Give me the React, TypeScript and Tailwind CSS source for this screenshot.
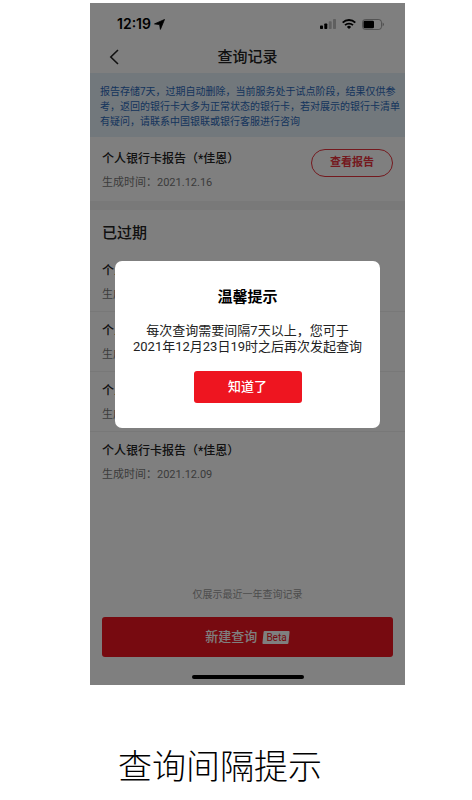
import { useState } from "react";

interface Report {
  id: number;
  title: string;
  date: string;
}

const current: Report = { id: 1, title: "个人银行卡报告（*佳恩）", date: "2021.12.16" };

const expired: Report[] = [
  { id: 2, title: "个人银行卡报告（*佳恩）", date: "2021.12.09" },
  { id: 3, title: "个人银行卡报告（*佳恩）", date: "2021.12.09" },
  { id: 4, title: "个人银行卡报告（*佳恩）", date: "2021.12.09" },
  { id: 5, title: "个人银行卡报告（*佳恩）", date: "2021.12.09" },
];

function StatusBar() {
  return (
    <div className="flex h-[42px] items-center justify-between pl-[27px] pr-[21px] text-black">
      <div className="flex items-center gap-[3px]">
        <span className="font-['Inter',sans-serif] text-[14px] leading-5 font-semibold">12:19</span>
        <svg
          width="11"
          height="11"
          viewBox="0 0 11 11"
          fill="currentColor"
          stroke="currentColor"
          strokeWidth=".8"
          strokeLinejoin="round"
          aria-hidden="true"
        >
          <path d="M10.5.5 6.4 10.4 5.6 5.6.5 4.9Z" />
        </svg>
      </div>
      <div className="flex items-center gap-[6px]">
        <svg width="16" height="10" viewBox="0 0 16 10" fill="currentColor" aria-hidden="true">
          <rect x="0" y="6.5" width="3" height="3.5" rx=".7" />
          <rect x="4.3" y="4.5" width="3" height="5.5" rx=".7" />
          <rect x="8.7" y="2.3" width="3" height="7.7" rx=".7" opacity=".25" />
          <rect x="13" y="0" width="3" height="10" rx=".7" opacity=".25" />
        </svg>
        <svg width="14" height="10" viewBox="0 0 14 10" fill="none" stroke="currentColor" aria-hidden="true">
          <path d="M.7 3.6a9 9 0 0 1 12.6 0" strokeWidth="1.9" />
          <path d="M3 6.2a5.8 5.8 0 0 1 8 0" strokeWidth="1.8" />
          <path d="M7 10 4.9 7.9a3 3 0 0 1 4.2 0Z" fill="currentColor" stroke="none" />
        </svg>
        <svg width="22" height="11" viewBox="0 0 22 11" fill="none" aria-hidden="true">
          <rect x=".5" y=".5" width="19" height="10" rx="2.8" stroke="currentColor" opacity=".35" />
          <path d="M20.6 3.6v3.8q1.3-.6 1.3-1.9t-1.3-1.9Z" fill="currentColor" opacity=".4" />
          <rect x="1.5" y="1.7" width="10.5" height="7.6" rx="1.4" fill="currentColor" />
        </svg>
      </div>
    </div>
  );
}

function ReportInfo({ report }: { report: Report }) {
  return (
    <div>
      <h3 className="text-[12px] leading-5 font-medium text-[#222]">{report.title}</h3>
      <p className="mt-1 text-[11px] leading-5 text-[#777]">生成时间：{report.date}</p>
    </div>
  );
}

export default function App() {
  const [open, setOpen] = useState(true);

  return (
    <main
      lang="zh-CN"
      className="bg-white pt-[3px] pr-[67px] pl-[90px] font-['Roboto','Noto_Sans_CJK_SC',sans-serif]"
    >
      <div className="relative flex min-h-[682px] flex-col bg-white">
        <StatusBar />

        <header className="grid h-7 grid-cols-[1fr_auto_1fr] items-center px-[18px] pb-1">
          <button type="button" aria-label="返回" className="w-4 text-[#222]">
            <svg width="12" height="16" viewBox="0 0 12 16" fill="none" stroke="currentColor" strokeWidth="1.6">
              <path d="M10 1 2.8 8l7.2 7" />
            </svg>
          </button>
          <h1 className="text-[15px] leading-5 font-medium text-[#222]">查询记录</h1>
        </header>

        <p className="bg-[#e4f0f8] px-[10px] pt-[11px] pb-2 text-[10px] leading-[15px] whitespace-nowrap text-[#2a68b8]">
          报告存储7天，过期自动删除，当前服务处于试点阶段，结果仅供参
          <br />
          考，返回的银行卡大多为正常状态的银行卡，若对展示的银行卡清单
          <br />
          有疑问，请联系中国银联或银行客服进行咨询
        </p>

        <section className="flex items-start justify-between border-b-[9px] border-[#f2f2f2] px-3 pt-3 pb-2">
          <ReportInfo report={current} />
          <button
            type="button"
            className="h-7 w-[82px] rounded-full border border-[#e8323c] text-[11px] font-bold text-[#e8323c]"
          >
            查看报告
          </button>
        </section>

        <section>
          <h2 className="px-3 pt-[13px] pb-[9px] text-[15px] leading-5 font-medium text-[#222]">已过期</h2>
          <ul>
            {expired.map((r) => (
              <li key={r.id} className="border-b border-[#f0f0f0] px-3 pt-[9px] pb-[6px] last:border-b-0">
                <ReportInfo report={r} />
              </li>
            ))}
          </ul>
        </section>

        <footer className="mt-auto px-3 pb-[6px]">
          <p className="mb-3 text-center text-[10px] leading-5 text-[#999]">仅展示最近一年查询记录</p>
          <button
            type="button"
            className="flex h-10 w-full items-center justify-center gap-[6px] rounded-[3px] bg-[#ee1520] text-[13px] font-medium text-white"
          >
            新建查询
            <span className="relative px-[3px] text-[10px] leading-[13px] font-normal text-[#ee1520]">
              <span className="absolute inset-0 -skew-x-6 rounded-[1px] bg-white" />
              <span className="relative">Beta</span>
            </span>
          </button>
          <div className="mx-auto mt-[18px] h-1 w-28 rounded-full bg-black" />
        </footer>

        {open && (
          <div className="absolute inset-0 flex items-center justify-center bg-black/50 px-[25px]">
            <div
              role="dialog"
              aria-modal="true"
              aria-labelledby="tip-title"
              className="flex w-full flex-col items-center rounded-[7px] bg-white pt-[26px] pb-[25px] text-[#222]"
            >
              <h2 id="tip-title" className="text-[15px] leading-5 font-bold text-black">
                温馨提示
              </h2>
              <p className="mt-4 text-center text-[13px] leading-4 whitespace-nowrap">
                每次查询需要间隔7天以上，您可于
                <br />
                2021年12月23日19时之后再次发起查询
              </p>
              <button
                type="button"
                onClick={() => setOpen(false)}
                className="mt-4 h-8 w-[108px] rounded-[3px] bg-[#ee1520] text-[13px] font-medium text-white"
              >
                知道了
              </button>
            </div>
          </div>
        )}
      </div>

      <p className="mt-[58px] pl-7 text-[34px] leading-[48px] font-light whitespace-nowrap text-black">
        查询间隔提示
      </p>
    </main>
  );
}
